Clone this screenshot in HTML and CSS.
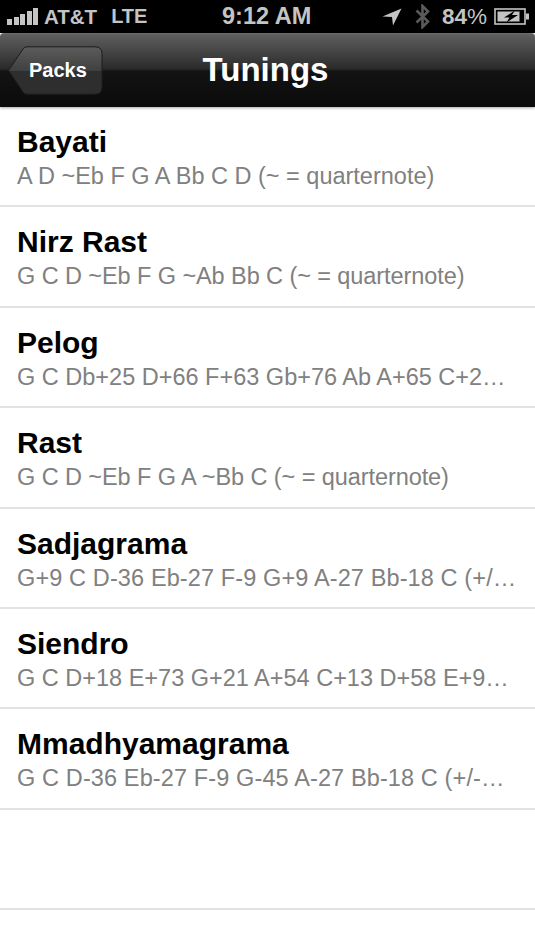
FILE: index.html
```html
<!DOCTYPE html>
<html lang="en">
<head>
  <meta charset="UTF-8" />
  <meta name="viewport" content="width=device-width, initial-scale=1.0" />
  <title>Tunings</title>
  <link rel="stylesheet" href="styles.css">
</head>
<body>
  <div class="phone">
    <!-- Status bar -->
    <div class="status-bar">
      <div class="status-left">
        <div class="signal">
          <span class="bar b1"></span><span class="bar b2"></span><span class="bar b3"></span><span class="bar b4"></span><span class="bar b5"></span>
        </div>
        <span class="carrier">AT&amp;T</span>
        <span class="network">LTE</span>
      </div>
      <div class="status-time">9:12 AM</div>
      <div class="status-right">
        <svg class="icon-location" width="20" height="18" viewBox="0 0 20 18">
          <path d="M19.500 0.500 L0.500 8.500 L10 9 L11 17.500 Z" fill="#c4c4c4"/>
        </svg>
        <svg class="icon-bluetooth" width="15" height="25" viewBox="0 0 15 25">
          <path d="M1.500 6.500 L13 17.500 L7.500 23 L7.500 2 L13 7.500 L1.500 18.500" fill="none" stroke="#5a5a5a" stroke-width="2.600"/>
        </svg>
        <span class="battery-text">84<span class="percent">%</span></span>
        <svg class="icon-battery" width="36" height="17" viewBox="0 0 36 17">
          <rect x="1" y="1" width="30" height="15" fill="none" stroke="#c4c4c4" stroke-width="1.600"/>
          <rect x="3.500" y="3.500" width="22" height="10" fill="#c4c4c4"/>
          <rect x="32" y="5.500" width="3" height="6" fill="#c4c4c4"/>
          <path d="M21 2.500 L10 9.500 L15.500 9.500 L12.500 14.500 L24 7 L18 7 Z" fill="#000"/>
        </svg>
      </div>
    </div>

    <!-- Nav bar -->
    <div class="nav-bar">
      <a href="#" class="back-btn">
        <svg class="back-shape" width="95" height="49" viewBox="0 0 95 49">
          <defs>
            <linearGradient id="backFill" x1="0" y1="0" x2="0" y2="1">
              <stop offset="0" stop-color="#5c5c5c"/>
              <stop offset="0.5" stop-color="#404040"/>
              <stop offset="0.52" stop-color="#2e2e2e"/>
              <stop offset="1" stop-color="#2e2e2e"/>
            </linearGradient>
          </defs>
          <path d="M0.500 24.500 L15 3 Q16.500 0.800 19 0.800 L87 0.800 Q94 0.800 94 7.500 L94 41.500 Q94 48.200 87 48.200 L19 48.200 Q16.500 48.200 15 46 Z" fill="url(#backFill)" stroke="#1c1c1c" stroke-width="1"/>
        </svg>
        <span class="back-label">Packs</span>
      </a>
      <h1 class="nav-title">Tunings</h1>
    </div>

    <!-- Tuning list -->
    <ul class="list">
      <li class="row">
        <div class="row-title">Bayati</div>
        <div class="row-sub">A D ~Eb F G A Bb C D (~ = quarternote)</div>
      </li>
      <li class="row">
        <div class="row-title">Nirz Rast</div>
        <div class="row-sub tight">G C D ~Eb F G ~Ab Bb C (~ = quarternote)</div>
      </li>
      <li class="row">
        <div class="row-title">Pelog</div>
        <div class="row-sub">G C Db+25 D+66 F+63 Gb+76 Ab A+65 C+2…</div>
      </li>
      <li class="row">
        <div class="row-title">Rast</div>
        <div class="row-sub tight">G C D ~Eb F G A ~Bb C (~ = quarternote)</div>
      </li>
      <li class="row">
        <div class="row-title">Sadjagrama</div>
        <div class="row-sub wide">G+9 C D-36 Eb-27 F-9 G+9 A-27 Bb-18 C (+/…</div>
      </li>
      <li class="row">
        <div class="row-title">Siendro</div>
        <div class="row-sub">G C D+18 E+73 G+21 A+54 C+13 D+58 E+9…</div>
      </li>
      <li class="row">
        <div class="row-title">Mmadhyamagrama</div>
        <div class="row-sub wide">G C D-36 Eb-27 F-9 G-45 A-27 Bb-18 C (+/-…</div>
      </li>
      <li class="row row-empty"></li>
    </ul>
  </div>
</body>
</html>
```

FILE: styles.css
```css
*, *::before, *::after {
  box-sizing: border-box;
}
html, body {
  height: 100%;
}
body {
  margin: 0;
  font-family: "Liberation Sans", Arial, sans-serif;
  background-color: #fff;
}
.phone {
  width: 535px;
  height: 950px;
  overflow: hidden;
  background-color: #fff;
}
.status-bar {
  height: 33px;
  background-color: #000;
  color: #c4c4c4;
  font-weight: bold;
  font-size: 20.500px;
  display: flex;
  justify-content: space-between;
  align-items: center;
  position: relative;
}
.status-left {
  display: flex;
  align-items: center;
  padding-left: 7px;
}
.signal {
  display: flex;
  align-items: flex-end;
  gap: 1.500px;
  height: 17px;
}
.bar {
  width: 5px;
  background-color: #c4c4c4;
}
.b1 { height: 6px; }
.b2 { height: 8px; }
.b3 { height: 11px; }
.b4 { height: 14px; }
.b5 { height: 17px; }
.carrier {
  margin-left: 6px;
}
.network {
  margin-left: 14px;
  font-size: 20px;
}
.status-time {
  position: absolute;
  left: 222px;
  top: 3px;
  font-size: 23.500px;
}
.status-right {
  display: flex;
  align-items: center;
  padding-right: 5px;
}
.icon-location {
  margin-right: 13px;
}
.icon-bluetooth {
  margin-right: 12px;
}
.battery-text {
  font-size: 22.500px;
  margin-right: 7px;
}
.percent {
  font-weight: normal;
}
.nav-bar {
  height: 74px;
  background: linear-gradient(#6e6e6e 0, #5e5e5e 2px, #2a2a2a 36px, #131313 38px, #0b0b0b 100%);
  border-radius: 4px 4px 0 0;
  box-shadow: 0 1px 3px rgba(0, 0, 0, 0.35);
  position: relative;
  display: flex;
  align-items: center;
  justify-content: center;
}
.nav-title {
  margin: 0 0 1px -4px;
  font-size: 33px;
  font-weight: bold;
  color: #fff;
}
.back-btn {
  position: absolute;
  left: 8px;
  top: 13px;
  width: 95px;
  height: 49px;
  display: flex;
  align-items: center;
  text-decoration: none;
}
.back-shape {
  position: absolute;
  left: 0;
  top: 0;
}
.back-label {
  position: relative;
  margin-left: 21px;
  color: #fff;
  font-weight: bold;
  font-size: 20px;
}
.list {
  list-style: none;
  margin: 0;
  padding: 0;
}
.row {
  height: 100.400px;
  padding: 18px 17px 0;
  border-bottom: 2px solid #e2e2e2;
}
.row-title {
  font-size: 30px;
  font-weight: bold;
  line-height: 33px;
  color: #000;
}
.row-sub {
  margin-top: 5px;
  font-size: 23.500px;
  line-height: 27px;
  color: #808080;
  white-space: nowrap;
}
.row-sub.tight {
  letter-spacing: -0.080px;
}
.row-sub.wide {
  letter-spacing: 0.120px;
}
```
